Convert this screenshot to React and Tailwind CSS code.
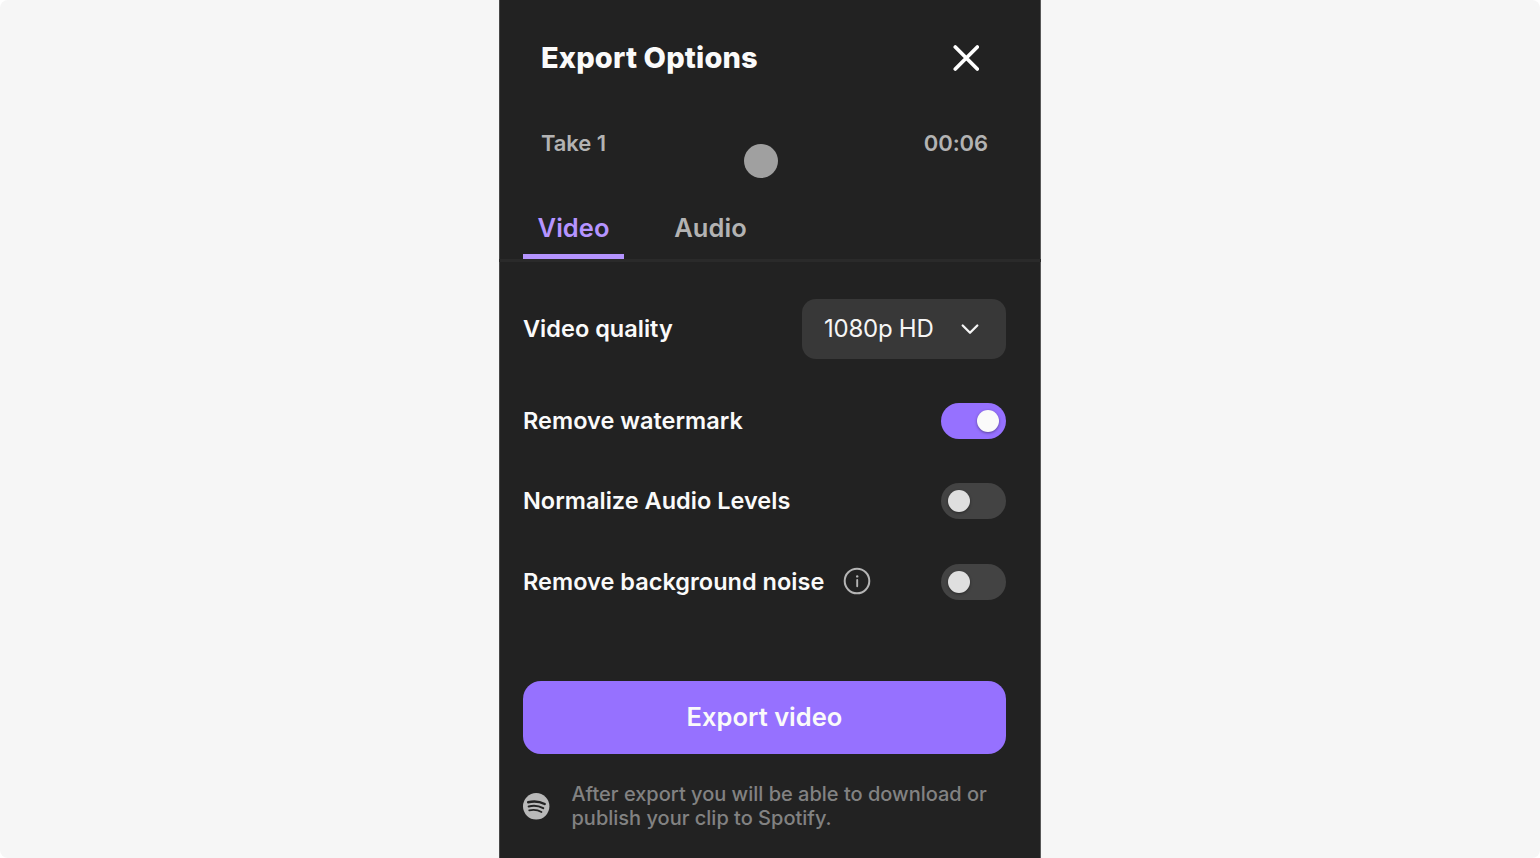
import { useState } from "react";

function Toggle({ on, onChange, label }) {
  return (
    <button
      type="button"
      role="switch"
      aria-checked={on}
      aria-label={label}
      onClick={() => onChange(!on)}
      className={
        "flex h-9 w-[65px] items-center rounded-full " +
        (on ? "justify-end bg-[#9671ff] pr-[7px]" : "justify-start bg-[#434343] pl-[7px]")
      }
    >
      <span
        className={
          "size-[22px] rounded-full shadow-[0_1px_3px_rgba(0,0,0,0.4)] " +
          (on ? "bg-[#fafafa]" : "bg-[#dfdfdf]")
        }
      />
    </button>
  );
}

function CloseIcon() {
  return (
    <svg viewBox="0 0 26 26" className="size-[26px]" fill="none" stroke="#fff" strokeWidth="3.7" strokeLinecap="round">
      <path d="M2.3 2 24.3 24M24.3 2 2.3 24" />
    </svg>
  );
}

function ChevronIcon() {
  return (
    <svg viewBox="0 0 18 12" className="h-3 w-[18px]" fill="none" stroke="#f5f5f5" strokeWidth="2.3" strokeLinecap="round" strokeLinejoin="round">
      <path d="M1.7 2.5 9 9.8 16.3 2.5" />
    </svg>
  );
}

function InfoIcon() {
  return (
    <svg viewBox="0 0 28 28" className="-mt-0.5 size-7" fill="none" stroke="#b5b5b5">
      <circle cx="14" cy="14" r="12.3" strokeWidth="2" />
      <path d="M14.2 13v6.2" strokeWidth="1.9" strokeLinecap="round" />
      <circle cx="14.2" cy="9.4" r="1.2" fill="#b5b5b5" stroke="none" />
    </svg>
  );
}

function SpotifyIcon() {
  return (
    <svg viewBox="0 0 27 27" className="-mt-px size-[27px] shrink-0" fill="none">
      <circle cx="13.2" cy="13.3" r="13.2" fill="#b9b9b9" />
      <g stroke="#222" strokeLinecap="round">
        <path d="M5.2 9.2C10.3 7.9 16.8 8.4 21.7 11" strokeWidth="2.5" />
        <path d="M5.7 13.5C10.3 12.3 15.8 12.8 20.2 15.2" strokeWidth="2.1" />
        <path d="M6.2 17.4C10.2 16.5 14.8 16.9 18.5 19" strokeWidth="1.7" />
      </g>
    </svg>
  );
}

export default function App() {
  const [watermark, setWatermark] = useState(true);
  const [normalize, setNormalize] = useState(false);
  const [noise, setNoise] = useState(false);

  return (
    <div className="h-[858px] w-[1540px] bg-white font-['Inter',sans-serif]">
      <div className="flex h-full justify-center overflow-hidden rounded-lg bg-[#f6f6f6]">
        <main className="relative flex h-full w-[542px] flex-col bg-[#222] shadow-[inset_1px_0_#484848,inset_-1px_0_#585858]">
          <header className="flex h-[116px] items-center justify-between pr-[62px] pl-[42px]">
            <h1 className="text-[29px] leading-9 font-extrabold tracking-[0.15px] text-[#fafafa]">Export Options</h1>
            <button type="button" aria-label="Close"><CloseIcon /></button>
          </header>
          <div className="flex h-[54px] items-center justify-between pr-[53px] pl-[42px] text-[22px] font-semibold tracking-[-0.1px] text-[#b3b3b3]">
            <span>Take 1</span>
            <span>00:06</span>
          </div>
          <nav className="flex h-[92px] items-end gap-9 border-b-[3px] border-[#2a2a2a] pl-6 text-[25.5px] font-semibold tracking-[0.02px] text-[#b3b3b3]">
            <button type="button" className="h-[60px] w-[101px] border-b-[5px] border-[#b594ff] pt-1 text-[#b594ff]">Video</button>
            <button type="button" className="h-[60px] w-[101px] border-b-[5px] border-transparent pt-1">Audio</button>
          </nav>
          <section className="flex flex-col pr-[35px] pl-6 text-[23.5px] font-semibold tracking-[0.02px] text-[#fafafa]">
            <div className="mt-[37px] flex h-[60px] items-center justify-between">
              <span>Video quality</span>
              <button type="button" className="flex h-[60px] w-[204px] items-center justify-between rounded-[14px] bg-[#383838] pr-[27px] pl-[22px] text-[24px] font-normal tracking-[-0.25px] text-[#f5f5f5]">
                <span>1080p HD</span>
                <ChevronIcon />
              </button>
            </div>
            <div className="mt-11 flex h-9 items-center justify-between">
              <span>Remove watermark</span>
              <Toggle on={watermark} onChange={setWatermark} label="Remove watermark" />
            </div>
            <div className="mt-11 flex h-9 items-center justify-between">
              <span>Normalize Audio Levels</span>
              <Toggle on={normalize} onChange={setNormalize} label="Normalize Audio Levels" />
            </div>
            <div className="mt-[45px] flex h-9 items-center justify-between">
              <div className="flex items-center gap-[19px]">
                <span>Remove background noise</span>
                <InfoIcon />
              </div>
              <Toggle on={noise} onChange={setNoise} label="Remove background noise" />
            </div>
            <button type="button" className="mt-[81px] h-[73px] rounded-[18px] bg-[#9671ff] text-[25.5px]">Export video</button>
          </section>
          <footer className="mt-[29px] flex items-center gap-[21.5px] pl-6 text-[20px] leading-[23.6px] font-medium text-[#828282]">
            <SpotifyIcon />
            <p>After export you will be able to download or<br />publish your clip to Spotify.</p>
          </footer>
          <span className="absolute top-36 left-[245px] size-[34px] rounded-full bg-[#a0a0a0]" />
        </main>
      </div>
    </div>
  );
}
